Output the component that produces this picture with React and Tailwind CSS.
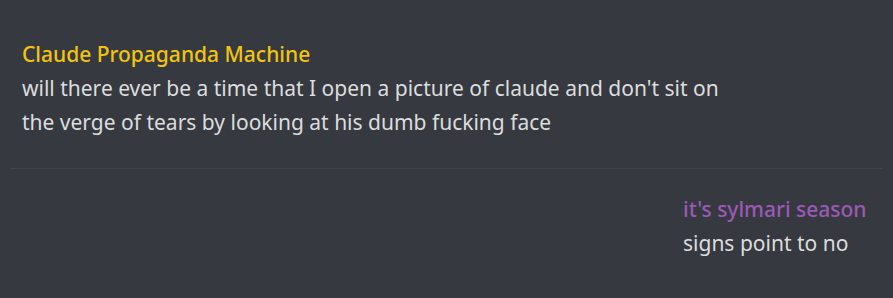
export default function App() {
  return (
    <div className="w-[893px] h-[298px] bg-[#36393f] overflow-hidden" style={{ fontFamily: "'Noto Sans', sans-serif" }}>
      <div className="pt-[37px] pl-[22px]">
        <div className="text-[21px] leading-[34px] font-medium text-[#f1c40f] whitespace-nowrap">Claude Propaganda Machine</div>
        <div className="text-[21px] leading-[34px] text-[#dcddde] whitespace-nowrap">
          will there ever be a time that I open a picture of claude and don't sit on
          <br />
          the verge of tears by looking at his dumb fucking face
        </div>
      </div>
      <div className="mt-[29px] mx-[11px] h-px bg-[#42454a]"></div>
      <div className="flex justify-end pr-[26px] pt-[23px]">
        <div className="w-[184px]">
          <div className="text-[21px] leading-[34px] font-medium text-[#9b59b6] whitespace-nowrap">it's sylmari season</div>
          <div className="text-[21px] leading-[34px] text-[#dcddde] whitespace-nowrap">signs point to no</div>
        </div>
      </div>
    </div>
  );
}
